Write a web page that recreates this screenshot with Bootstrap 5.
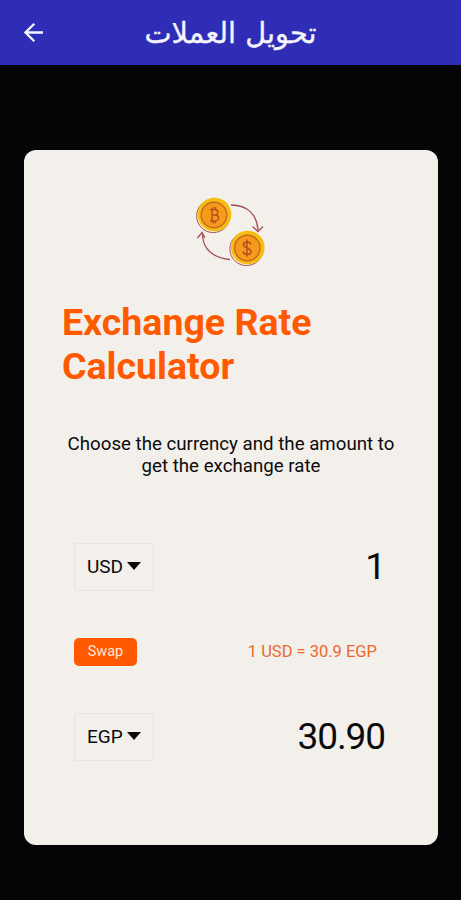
<!DOCTYPE html>
<html lang="en">
<head>
<meta charset="utf-8">
<meta name="viewport" content="width=device-width, initial-scale=1">
<title>Exchange Rate Calculator</title>
<link href="https://cdn.jsdelivr.net/npm/bootstrap@5.3.0/dist/css/bootstrap.min.css" rel="stylesheet">
<style>
  body { background: #050505; font-family: Roboto, sans-serif; color: #0b0b0b; min-height: 900px; }
  .app-bar { background: #2f2cb6; height: 65px; padding: 0 24px; color: #f4f4ff; }
  .app-bar .back { width: 20px; height: 20px; line-height: 0; }
  .app-title { font-family: "DejaVu Sans", sans-serif; font-size: 28.8px; line-height: 40px; margin: 0; padding-top: 1px; white-space: nowrap; -webkit-text-stroke: .35px currentColor; }
  .calc-card { margin: 85px 23px 0 24px; height: 695px; border: 0; border-radius: 12px; background: #f3efeb; padding: 46px 38px 0; }
  .calc-title { color: #ff5a00; font-size: 37.5px; line-height: 44px; font-weight: 700; margin: 32px 0 0; }
  .calc-text { font-size: 18.7px; line-height: 22px; margin: 45px -6px 0; }
  .calc-rows { margin: 66px 12px 0; }
  .currency { width: 80px; height: 48px; border: 1px solid #e8e4e1; border-radius: 0; background: transparent; font-size: 19px; line-height: 1; padding: 0 0 2px 12px; gap: 4px; color: #0b0b0b; }
  .amount { font-size: 37px; line-height: 48px; letter-spacing: -1.1px; padding-right: 3px; }
  .swap-row { margin: 47px 0; }
  .swap { width: 63px; height: 28px; background: #ff5a00; color: #ffe6d6; font-size: 14.5px; line-height: 1; border: 0; border-radius: 5px; padding: 0; }
  .rate { color: #ea6a2c; font-size: 16.5px; line-height: 28px; padding-right: 11px; }
</style>
</head>
<body>
<header class="app-bar d-flex align-items-center justify-content-between">
  <a href="#" class="back text-reset" aria-label="Back">
    <svg width="20" height="20" viewBox="0 0 20 20" fill="none" stroke="currentColor" stroke-width="2.300"><path d="M19 9.500H2M10.300 .8L1.500 9.500L10.300 18.200"/></svg>
  </a>
  <h1 class="app-title" lang="ar" dir="rtl">تحويل العملات</h1>
  <span class="back"></span>
</header>
<main class="card calc-card">
  <svg class="d-block mx-auto" width="72" height="72" viewBox="0 0 72 72" fill="none">
    <g stroke="#a65050" stroke-width="1.300">
      <path d="M36 9C53 9 62 19 63 34M57.500 30.500L63 35.500L68 30.500"/>
      <path d="M35 63.500C18 62 7.500 53 7.500 38M2.500 42L7 36.500L10 42"/>
    </g>
    <g>
      <circle cx="18.200" cy="20" r="16.600" fill="#f8e9d5" stroke="#a65a55"/>
      <circle cx="19.500" cy="18.500" r="16.800" fill="#f6bc13"/>
      <circle cx="19" cy="19" r="12.800" fill="#f79a1b" stroke="#c36a20" stroke-width="1.400"/>
      <path d="M15 13.500h5.500a2.800 2.800 0 0 1 0 5.500H17M20.500 19a3 3 0 0 1 0 6H15M17 13.500V25M18 11v2.500M20.500 11v2.500M18 25v2.500M20.500 25v2.500" stroke="#b84c21" stroke-width="1.400"/>
    </g>
    <g>
      <circle cx="51.500" cy="53" r="16.600" fill="#f8e9d5" stroke="#a65a55"/>
      <circle cx="52.800" cy="51.500" r="16.800" fill="#f6bc13"/>
      <circle cx="52.300" cy="52" r="12.800" fill="#f79a1b" stroke="#c36a20" stroke-width="1.400"/>
      <path d="M56 48.500C55 45 48.500 45 48.500 48.700S56 51.500 56 55.500S49 59.500 48 55.500M52 43.500V60.500" stroke="#b84c21" stroke-width="1.500"/>
    </g>
  </svg>
  <h2 class="calc-title">Exchange Rate Calculator</h2>
  <p class="calc-text text-center">Choose the currency and the amount to<br>get the exchange rate</p>
  <div class="calc-rows d-flex flex-column">
    <div class="d-flex align-items-center justify-content-between">
      <button class="btn currency d-flex align-items-center" type="button">USD
        <svg width="14" height="8" viewBox="0 0 14 8"><path d="M0 0H14L7 8Z" fill="#0b0b0b"/></svg>
      </button>
      <span class="amount">1</span>
    </div>
    <div class="swap-row d-flex align-items-center justify-content-between">
      <button class="btn swap" type="button">Swap</button>
      <span class="rate">1 USD = 30.9 EGP</span>
    </div>
    <div class="d-flex align-items-center justify-content-between">
      <button class="btn currency d-flex align-items-center" type="button">EGP
        <svg width="14" height="8" viewBox="0 0 14 8"><path d="M0 0H14L7 8Z" fill="#0b0b0b"/></svg>
      </button>
      <span class="amount">30.90</span>
    </div>
  </div>
</main>
<script src="https://cdn.jsdelivr.net/npm/bootstrap@5.3.0/dist/js/bootstrap.bundle.min.js"></script>
</body>
</html>
